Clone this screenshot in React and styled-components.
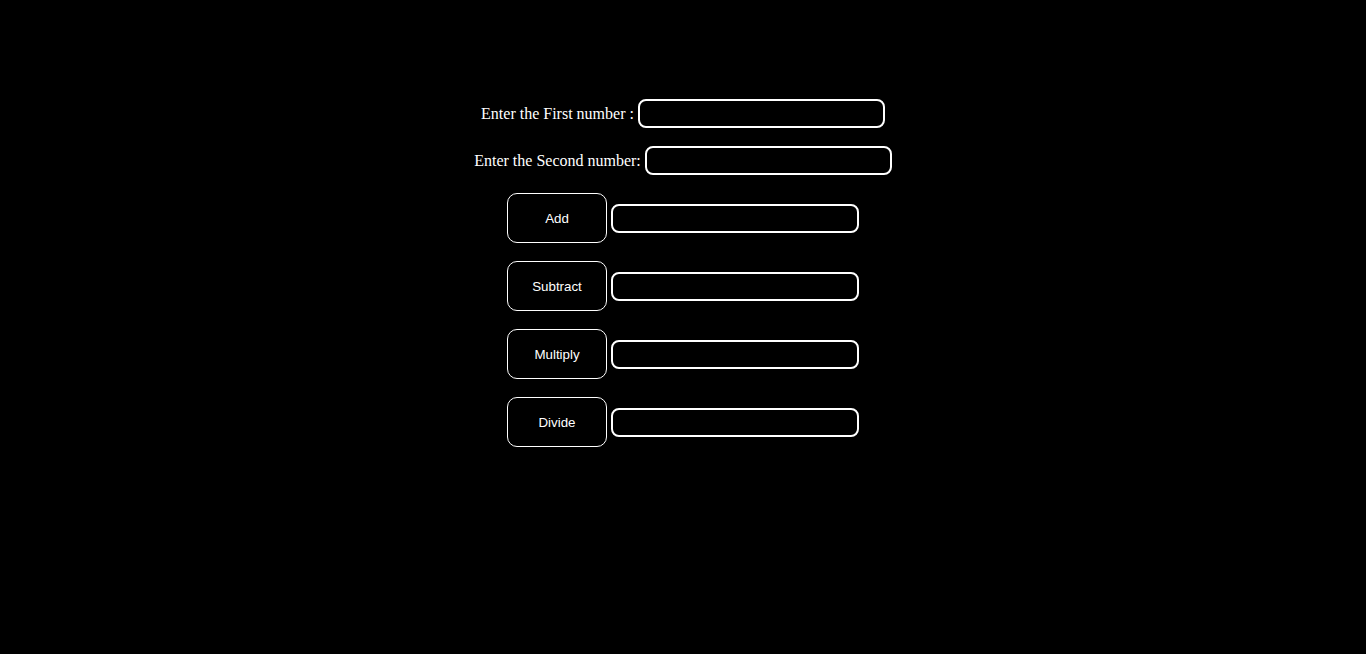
import React from 'react';
import styled, { createGlobalStyle } from 'styled-components';

const GlobalStyle = createGlobalStyle`
  html, body {
    margin: 0;
    padding: 0;
    background: #000;
  }
  body {
    font-family: "Liberation Serif", "Times New Roman", serif;
    color: #fff;
  }
`;

const Page = styled.div`
  min-height: 654px;
  box-sizing: border-box;
  padding-top: 99px;
  display: flex;
  flex-direction: column;
  align-items: center;
  gap: 18px;
`;

const Row = styled.div`
  display: flex;
  align-items: center;
  gap: 4px;
`;

const Label = styled.label`
  font-size: 16px;
  color: #fff;
  white-space: pre;
`;

const Field = styled.input`
  box-sizing: border-box;
  width: ${(p) => p.$w || 247}px;
  height: 29px;
  border: 2px solid #fff;
  border-radius: 8px;
  background: #000;
  color: #fff;
  outline: none;
  padding: 0 8px;
`;

const OpButton = styled.button`
  box-sizing: border-box;
  width: 100px;
  height: 50px;
  border: 1px solid #fff;
  border-radius: 10px;
  background: #000;
  color: #fff;
  font-family: "Liberation Sans", Arial, sans-serif;
  font-size: 13.33px;
  cursor: pointer;
`;

const ops = ['Add', 'Subtract', 'Multiply', 'Divide'];

const App = () => {
  return (
    <>
      <GlobalStyle />
      <Page>
        <Row>
          <Label>Enter the First number :</Label>
          <Field type="text" />
        </Row>
        <Row>
          <Label>Enter the Second number:</Label>
          <Field type="text" />
        </Row>
        {ops.map((op) => (
          <Row key={op}>
            <OpButton>{op}</OpButton>
            <Field type="text" readOnly $w={248} />
          </Row>
        ))}
      </Page>
    </>
  );
};

export default App;
